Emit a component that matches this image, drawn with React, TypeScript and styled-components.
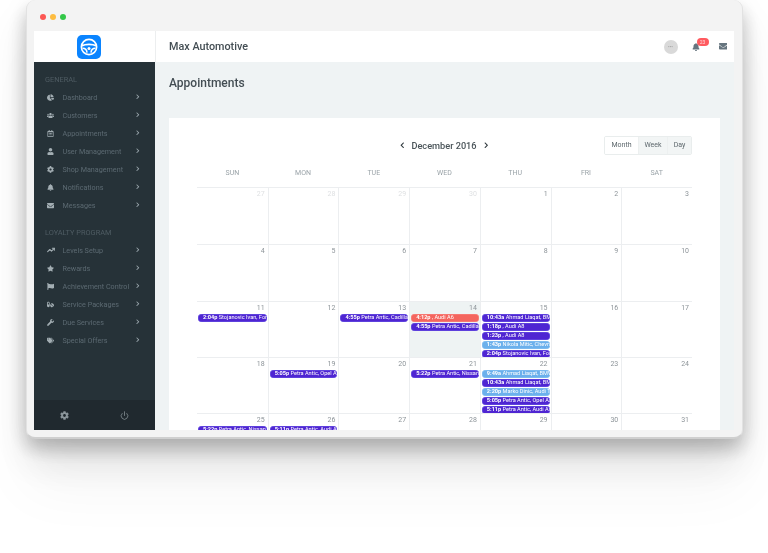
import React from "react";
import styled, { createGlobalStyle } from "styled-components";
import {
  FaChartPie, FaUsers, FaRegCalendarAlt, FaUser, FaCog, FaBell, FaEnvelope,
  FaStar, FaFlag, FaPills, FaWrench, FaTags, FaChevronLeft, FaChevronRight,
} from "react-icons/fa";
import { FiPower } from "react-icons/fi";
import { TrendingUp } from "lucide-react";

const Global = createGlobalStyle`
  html, body { margin: 0; padding: 0; background: #fff; overflow: hidden; }
  body { font-family: Roboto, "Liberation Sans", sans-serif; }
  * { box-sizing: border-box; }
`;

const Page = styled.div`
  width: 768px;
  height: 553px;
  overflow: hidden;
  padding-left: 26px;
`;
const Win = styled.div`
  width: 717px;
  height: 439px;
  display: flex;
  flex-direction: column;
  background: #f3f3f3;
  border-radius: 9px;
  border: 1px solid #e2e2e2;
  border-top: 0;
  border-bottom: 2px solid #cfcfcf;
  padding: 0 8px 7px 7px;
  box-shadow: 0 10px 18px rgba(0, 0, 0, 0.2), 0 24px 40px rgba(0, 0, 0, 0.1), 0 50px 60px rgba(0, 0, 0, 0.04), 0 6px 30px rgba(0, 0, 0, 0.07);
  filter: blur(0.4px);
`;
const TitleBar = styled.div`
  height: 31px;
  flex: none;
  display: flex;
  align-items: center;
  gap: 4px;
  padding: 3px 0 0 6px;
`;
const Light = styled.span<{ $c: string }>`
  width: 6px;
  height: 6px;
  border-radius: 50%;
  background: ${(p) => p.$c};
`;
const Screen = styled.div`
  flex: 1;
  display: flex;
  min-height: 0;
`;
const Side = styled.aside`
  width: 121px;
  flex: none;
  display: flex;
  flex-direction: column;
  background: #263238;
`;
const LogoBar = styled.div`
  height: 31px;
  flex: none;
  background: #fff;
  display: flex;
  align-items: center;
  justify-content: center;
  padding-right: 11px;
`;
const Nav = styled.nav`
  flex: 1;
  padding-top: 9px;
`;
const Group = styled.div<{ $gap?: number }>`
  margin-top: ${(p) => p.$gap ?? 0}px;
  font-size: 7.4px;
  line-height: 17px;
  height: 17px;
  padding-left: 11px;
  color: #4f5c63;
`;
const Item = styled.div`
  height: 18px;
  display: flex;
  align-items: center;
  color: #5c6a72;
  font-size: 7.2px;
  padding-left: 13px;
`;
const ItemIcon = styled.span`
  width: 15.5px;
  display: flex;
  color: #a3aeb3;
  font-size: 7px;
`;
const ItemLabel = styled.span`
  flex: 1;
`;
const ItemArrow = styled.span`
  width: 20px;
  display: flex;
  color: #98a4aa;
  font-size: 5.5px;
`;
const SideFoot = styled.div`
  height: 30px;
  flex: none;
  background: #20292f;
  display: grid;
  grid-template-columns: 60px 60px;
  align-items: center;
  justify-items: center;
  color: #8a949a;
  font-size: 9px;
`;
const Content = styled.main`
  flex: 1;
  min-width: 0;
  background: #eff3f4;
  display: flex;
  flex-direction: column;
  overflow: hidden;
`;
const Top = styled.header`
  height: 31px;
  flex: none;
  background: #fff;
  border-left: 1px solid #eceeef;
  display: flex;
  align-items: center;
  padding: 0 7px 0 13px;
`;
const Brand = styled.div`
  flex: 1;
  font-size: 10.8px;
  font-weight: 500;
  color: #444e54;
`;
const Avatar = styled.div`
  width: 14px;
  height: 14px;
  border-radius: 50%;
  background: #d9d9d9;
  color: #a0a0a0;
  font-size: 5px;
  line-height: 14px;
  text-align: center;
  margin-right: 14px;
`;
const BellWrap = styled.div`
  position: relative;
  display: flex;
  color: #66757f;
  font-size: 8px;
  margin-right: 19px;
`;
const Badge = styled.span`
  position: absolute;
  left: 5px;
  top: -5px;
  width: 12px;
  height: 8px;
  border-radius: 4px;
  background: #ff5a5f;
  color: #ffd9da;
  font-size: 5px;
  line-height: 8px;
  text-align: center;
`;
const Mail = styled.div`
  display: flex;
  color: #66757f;
  font-size: 8.5px;
`;
const PageTitle = styled.h1`
  margin: 0;
  height: 56px;
  flex: none;
  padding: 13px 0 0 14px;
  font-size: 12px;
  line-height: 16px;
  font-weight: 500;
  color: #434d53;
`;
const Card = styled.section`
  flex: 1;
  margin: 0 14px;
  padding: 18px 28px 0;
  background: #fff;
  overflow: hidden;
`;
const CalHead = styled.div`
  height: 19px;
  position: relative;
  display: flex;
  align-items: center;
  justify-content: center;
  margin-left: -1px;
`;
const Month = styled.div`
  display: flex;
  align-items: center;
  gap: 6px;
  font-size: 9.2px;
  font-weight: 500;
  color: #4a5459;
`;
const Nudge = styled.span`
  display: flex;
  font-size: 6.5px;
  color: #2f383d;
`;
const Views = styled.div`
  position: absolute;
  right: 0;
  top: 0;
  height: 19px;
  display: flex;
  border: 1px solid #e9eded;
  border-radius: 2px;
  overflow: hidden;
`;
const View = styled.div<{ $on?: boolean; $w: number }>`
  width: ${(p) => p.$w}px;
  text-align: center;
  font-size: 7px;
  line-height: 17px;
  color: #5d676c;
  background: ${(p) => (p.$on ? "#fff" : "#f2f5f5")};
  border-left: ${(p) => (p.$on ? "0" : "1px solid #edf0f0")};
`;
const Days = styled.div`
  height: 32px;
  display: grid;
  grid-template-columns: repeat(7, 1fr);
  padding-top: 12px;
`;
const DayName = styled.div`
  text-align: center;
  font-size: 7px;
  line-height: 12px;
  color: #9aa3a8;
`;
const Week = styled.div<{ $h: number }>`
  height: ${(p) => p.$h}px;
  display: grid;
  grid-template-columns: repeat(7, 1fr);
  border-top: 1px solid #eceef0;
`;
const Cell = styled.div<{ $today?: boolean }>`
  min-width: 0;
  overflow: hidden;
  position: relative;
  background: ${(p) => (p.$today ? "#eef3f3" : "#fff")};
  border-left: 1px solid #eceef0;
  padding: 2px 1px 0 1px;
  &:first-child { border-left: 0; }
`;
const DateNum = styled.div<{ $muted?: boolean }>`
  height: 9px;
  text-align: right;
  padding-right: 2px;
  font-size: 7px;
  line-height: 9px;
  color: ${(p) => (p.$muted ? "#dfe1e3" : "#8d9499")};
  margin-bottom: 1px;
`;
const Ev = styled.div<{ $k: string }>`
  height: 8px;
  margin-bottom: 1px;
  border-radius: 4px;
  padding-left: 5px;
  font-size: 5.6px;
  line-height: 7.5px;
  white-space: nowrap;
  overflow: hidden;
  color: #fff;
  background: ${(p) => (p.$k === "r" ? "#f4655e" : p.$k === "b" ? "#6bb0ec" : "#4f25d2")};
  box-shadow: inset 0 0 0 0.5px ${(p) => (p.$k === "r" ? "#f98a84" : p.$k === "b" ? "#8cc3f2" : "#6d5ce6")};
  & b { font-weight: 700; }
`;

const Logo = () => (
  <svg width="24" height="24" viewBox="0 0 24 24">
    <rect width="24" height="24" rx="5" fill="#0a84ff" />
    <circle cx="12" cy="12" r="7.6" fill="none" stroke="#fff" strokeWidth="1.7" />
    <path d="M5 10.8C8 8.8 16 8.8 19 10.8" fill="none" stroke="#fff" strokeWidth="1.8" />
    <path d="M5.6 13.2c2.8 0 4.2 1.6 4.4 4.4M18.4 13.2c-2.8 0-4.2 1.6-4.4 4.4" fill="none" stroke="#fff" strokeWidth="1.5" />
    <circle cx="12" cy="13.6" r="1.5" fill="#fff" />
  </svg>
);

const Trend = () => <TrendingUp size={8} strokeWidth={3.2} />;

const general = [
  ["Dashboard", FaChartPie], ["Customers", FaUsers], ["Appointments", FaRegCalendarAlt],
  ["User Management", FaUser], ["Shop Management", FaCog], ["Notifications", FaBell], ["Messages", FaEnvelope],
] as const;
const loyalty = [
  ["Levels Setup", Trend], ["Rewards", FaStar], ["Achievement Control", FaFlag],
  ["Service Packages", FaPills], ["Due Services", FaWrench], ["Special Offers", FaTags],
] as const;

type E = [string, string, string?];
type D = { n: number; m?: boolean; t?: boolean; e?: E[] };
const A = "Ahmad Liaqat, BMW X5 2014";
const weeks: { h: number; d: D[] }[] = [
  { h: 57, d: [{ n: 27, m: true }, { n: 28, m: true }, { n: 29, m: true }, { n: 30, m: true }, { n: 1 }, { n: 2 }, { n: 3 }] },
  { h: 57, d: [{ n: 4 }, { n: 5 }, { n: 6 }, { n: 7 }, { n: 8 }, { n: 9 }, { n: 10 }] },
  { h: 56, d: [
    { n: 11, e: [["2:04p", "Stojanovic Ivan, Ford Focus"]] }, { n: 12 },
    { n: 13, e: [["4:55p", "Petra Antic, Cadillac ATS"]] },
    { n: 14, t: true, e: [["4:12p", ", Audi A6", "r"], ["4:55p", "Petra Antic, Cadillac ATS"]] },
    { n: 15, e: [["10:43a", A], ["1:18p", ", Audi A8"], ["1:23p", ", Audi A8"], ["1:43p", "Nikola Mitic, Chevrolet Aveo", "b"], ["2:04p", "Stojanovic Ivan, Ford Focus"]] },
    { n: 16 }, { n: 17 },
  ] },
  { h: 56, d: [
    { n: 18 }, { n: 19, e: [["5:05p", "Petra Antic, Opel Astra"]] }, { n: 20 },
    { n: 21, e: [["5:22p", "Petra Antic, Nissan"]] },
    { n: 22, e: [["9:49a", A, "b"], ["10:43a", A], ["2:20p", "Marko Dinic, Audi TT", "b"], ["5:05p", "Petra Antic, Opel Astra"], ["5:11p", "Petra Antic, Audi A6"]] },
    { n: 23 }, { n: 24 },
  ] },
  { h: 56, d: [
    { n: 25, e: [["5:22p", "Petra Antic, Nissan"]] }, { n: 26, e: [["5:11p", "Petra Antic, Audi A6"]] },
    { n: 27 }, { n: 28 }, { n: 29 }, { n: 30 }, { n: 31 },
  ] },
];

const NavItem = ({ label, Icon }: { label: string; Icon: React.ComponentType }) => (
  <Item>
    <ItemIcon><Icon /></ItemIcon>
    <ItemLabel>{label}</ItemLabel>
    <ItemArrow><FaChevronRight /></ItemArrow>
  </Item>
);

export default function App() {
  return (
    <Page>
      <Global />
      <Win>
        <TitleBar>
          <Light $c="#fc5753" />
          <Light $c="#fdbc40" />
          <Light $c="#33c748" />
        </TitleBar>
        <Screen>
          <Side>
            <LogoBar><Logo /></LogoBar>
            <Nav>
              <Group>GENERAL</Group>
              {general.map(([l, I]) => <NavItem key={l} label={l} Icon={I} />)}
              <Group $gap={10}>LOYALTY PROGRAM</Group>
              {loyalty.map(([l, I]) => <NavItem key={l} label={l} Icon={I} />)}
            </Nav>
            <SideFoot>
              <FaCog />
              <FiPower />
            </SideFoot>
          </Side>
          <Content>
            <Top>
              <Brand>Max Automotive</Brand>
              <Avatar>•••</Avatar>
              <BellWrap><FaBell /><Badge>23</Badge></BellWrap>
              <Mail><FaEnvelope /></Mail>
            </Top>
            <PageTitle>Appointments</PageTitle>
            <Card>
              <CalHead>
                <Month>
                  <Nudge><FaChevronLeft /></Nudge>
                  December 2016
                  <Nudge><FaChevronRight /></Nudge>
                </Month>
                <Views>
                  <View $on $w={33}>Month</View>
                  <View $w={29}>Week</View>
                  <View $w={24}>Day</View>
                </Views>
              </CalHead>
              <Days>
                {["SUN", "MON", "TUE", "WED", "THU", "FRI", "SAT"].map((d) => <DayName key={d}>{d}</DayName>)}
              </Days>
              {weeks.map((w, i) => (
                <Week key={i} $h={w.h}>
                  {w.d.map((d) => (
                    <Cell key={d.n + (d.m ? "m" : "")} $today={d.t}>
                      <DateNum $muted={d.m}>{d.n}</DateNum>
                      {d.e?.map((ev, j) => (
                        <Ev key={j} $k={ev[2] ?? "p"}><b>{ev[0]}</b> {ev[1]}</Ev>
                      ))}
                    </Cell>
                  ))}
                </Week>
              ))}
            </Card>
          </Content>
        </Screen>
      </Win>
    </Page>
  );
}
